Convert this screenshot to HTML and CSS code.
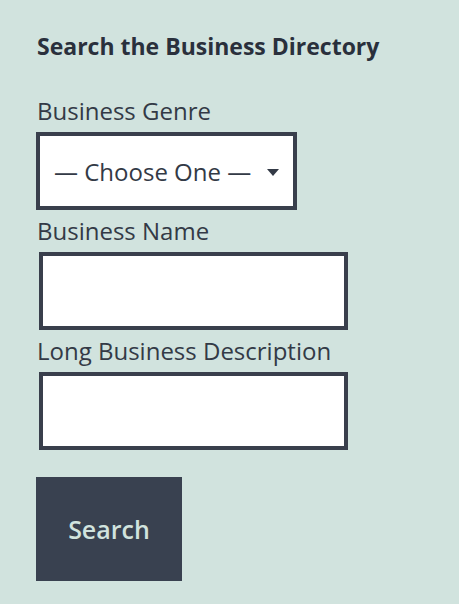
FILE: index.html
```html
<!DOCTYPE html>
<html lang="en">
<head>
<meta charset="utf-8">
<title>Search the Business Directory</title>
<link rel="stylesheet" href="styles.css">
</head>
<body>
<form class="search-form">
  <h2 class="title">Search the Business Directory</h2>
  <label class="label" for="genre">Business Genre</label>
  <div class="select-wrap">
    <select id="genre" class="select">
      <option>— Choose One —</option>
    </select>
    <svg class="caret" width="12" height="7" viewBox="0 0 12 7" aria-hidden="true"><path d="M0 0h12L6 7z" fill="#333a46"/></svg>
  </div>
  <label class="label" for="name">Business Name</label>
  <input id="name" class="field" type="text">
  <label class="label" for="desc">Long Business Description</label>
  <input id="desc" class="field" type="text">
  <button class="btn" type="button">Search</button>
</form>
</body>
</html>
```
FILE: styles.css
```css
html, body {
  margin: 0;
  padding: 0;
  background: #d1e3de;
}
body {
  font-family: "Open Sans", "Noto Sans", sans-serif;
  color: #333a46;
}
.search-form {
  display: flex;
  flex-direction: column;
  align-items: flex-start;
  padding: 31px 0 0 36px;
}
.title {
  margin: 0 0 29px 1px;
  font-size: 23px;
  line-height: 30px;
  font-weight: 700;
  color: #2a303c;
}
.label {
  display: block;
  margin-left: 1px;
  font-size: 24px;
  line-height: 42px;
  height: 42px;
}
.select-wrap {
  position: relative;
  width: 261px;
  height: 78px;
}
.select {
  appearance: none;
  -webkit-appearance: none;
  box-sizing: border-box;
  width: 100%;
  height: 100%;
  margin: 0;
  border: 4px solid #393f4c;
  border-radius: 0;
  background: #fff;
  padding: 0 0 0 14px;
  font-family: inherit;
  font-size: 24px;
  color: #333a46;
}
.caret {
  position: absolute;
  right: 18px;
  top: 37px;
}
.field {
  box-sizing: border-box;
  width: 309px;
  height: 78px;
  margin: 0 0 0 3px;
  border: 4px solid #393f4c;
  border-radius: 0;
  background: #fff;
  padding: 0 12px;
  font-family: inherit;
  font-size: 24px;
}
.btn {
  margin-top: 27px;
  width: 146px;
  height: 104px;
  border: 0;
  border-radius: 0;
  background: #394150;
  color: #d1e3de;
  font-family: inherit;
  font-size: 25px;
  font-weight: 600;
  padding: 0;
}
```
